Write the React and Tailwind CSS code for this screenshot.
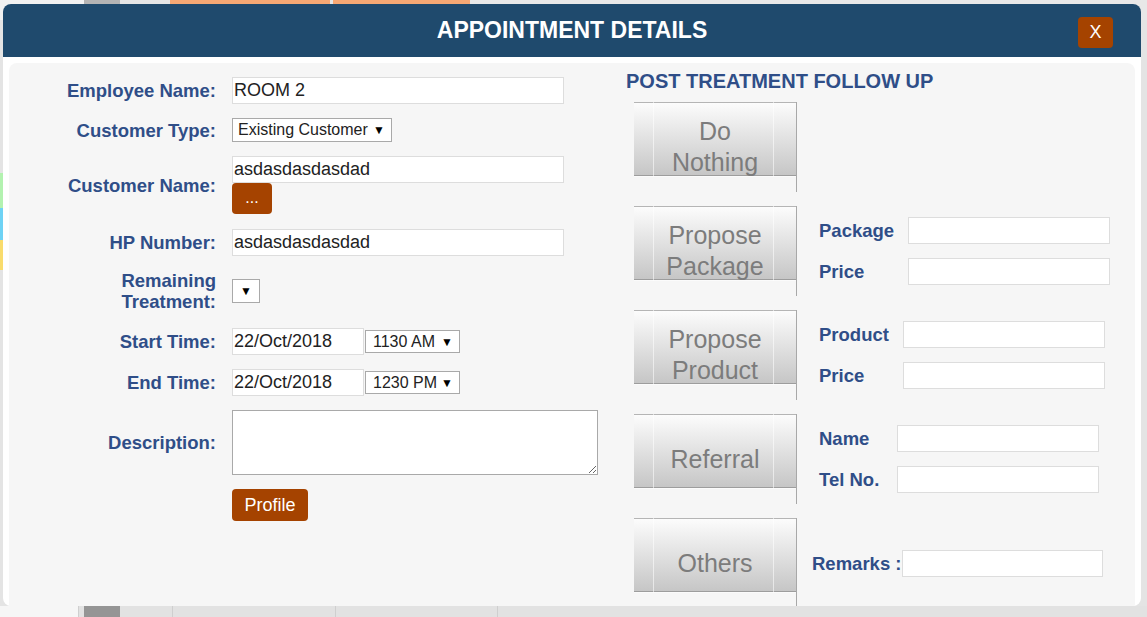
import React from "react";

// appointment popup over the schedule grid

const label = "text-[#2f4e88] font-bold text-[18.5px] leading-[21px]";
const brown = "bg-[#a54300] text-white rounded-[4px]";

function TextBox({ value, w = "w-[332px]" }) {
  return (
    <div className={`${w} h-[27px] bg-white border border-[#dddddd] flex items-center pl-px text-[18px] text-[#222] whitespace-nowrap overflow-hidden`}>
      {value}
    </div>
  );
}

function Picker({ value, w, h = "h-[24px]", pl = "pl-[5px]" }) {
  return (
    <div className={`${w} ${h} ${pl} bg-white border border-[#a9a9a9] flex items-center text-[16px] text-[#222] whitespace-nowrap`}>
      {value && <span className="flex-1">{value}</span>}
      <span className={`text-[12px] text-black ${value ? "pr-[6px]" : "mx-auto"}`}>▼</span>
    </div>
  );
}

function Row({ text, children, className = "" }) {
  return (
    <div className={`flex items-center ${className}`}>
      <div className={`w-[207px] text-right ${label}`}>{text}</div>
      <div className="ml-4 flex flex-col items-start">{children}</div>
    </div>
  );
}

function FollowButton({ lines }) {
  return (
    <div className="w-[163px] h-[90px] shrink-0 border-r border-[#a8a8a8] bg-no-repeat bg-[length:100%_75px] bg-[linear-gradient(to_right,transparent_19px,rgba(255,255,255,0.55)_19px,rgba(255,255,255,0.55)_20px,transparent_20px,transparent_139px,rgba(255,255,255,0.55)_139px,rgba(255,255,255,0.55)_140px,transparent_140px),linear-gradient(to_bottom,#b5b5b5_0px,#b5b5b5_1px,#fcfcfc_1px,#c6c6c6_73px,#9d9d9d_73px,#9d9d9d_74px,#fbfbfb_74px,#fbfbfb_75px)] flex flex-col items-center justify-center text-[25px] leading-[31px] text-[#7c7c7c]">
      {lines.map((l) => (
        <span key={l}>{l}</span>
      ))}
    </div>
  );
}

function SideField({ text, lw, iw = "w-[202px]" }) {
  return (
    <div className="flex items-center">
      <span className={`${lw} ${label} whitespace-nowrap`}>{text}</span>
      <div className={`${iw} h-[27px] bg-white border border-[#dddddd]`} />
    </div>
  );
}

function Block({ lines, children, gap = "ml-[22px]" }) {
  return (
    <div className="flex items-center">
      <FollowButton lines={lines} />
      <div className={`${gap} flex flex-col gap-[14px]`}>{children}</div>
    </div>
  );
}

export default function App() {
  return (
    <div className="relative w-[1147px] h-[617px] overflow-hidden bg-[#e4e4e4] font-['Liberation_Sans',Arial,sans-serif]">
      {/* schedule page behind the popup */}
      <div className="flex flex-col h-full">
        <div className="flex h-[20px]">
          <div className="w-[84px] bg-[#f2f2f2]" />
          <div className="w-[36px] bg-[#b4b4b4]" />
          <div className="w-[50px] bg-[#e6e6e6]" />
          <div className="w-[160px] bg-[#f6a874]" />
          <div className="w-[3px] bg-[#e6e6e6]" />
          <div className="w-[137px] bg-[#f6a874]" />
          <div className="flex-1 bg-[#e8e8e8]" />
        </div>
        <div className="flex-1 flex flex-col w-[3px] pt-[153px]">
          <div className="h-[35px] bg-[#b3f2b0]" />
          <div className="h-[32px] bg-[#6fd3f5]" />
          <div className="h-[30px] bg-[#f9dc6d]" />
        </div>
        <div className="flex h-[11px]">
          <div className="w-[78px] bg-[#f6f6f6]" />
          <div className="w-px bg-[#cfcfcf]" />
          <div className="w-[5px] bg-[#e2e2e2]" />
          <div className="w-[36px] bg-[#959595]" />
          <div className="w-[52px] bg-[#e2e2e2]" />
          <div className="w-px bg-[#cfcfcf]" />
          <div className="w-[162px] bg-[#e2e2e2]" />
          <div className="w-px bg-[#cfcfcf]" />
          <div className="w-[161px] bg-[#e2e2e2]" />
          <div className="w-px bg-[#cfcfcf]" />
          <div className="flex-1 bg-[#e2e2e2]" />
        </div>
      </div>

      {/* popup */}
      <div className="absolute left-[3px] top-[4px] w-[1138px] h-[602px] bg-white rounded-[8px] overflow-hidden flex flex-col">
        <div className="h-[53px] shrink-0 bg-[#1f4a6d] grid grid-cols-[1fr_auto_1fr] items-center">
          <div />
          <h1 className="text-white font-bold text-[23px] leading-none">APPOINTMENT DETAILS</h1>
          <div className="flex justify-end pr-[28px] pt-[3px]">
            <button className={`${brown} w-[35px] h-[31px] text-[18px] leading-none`}>X</button>
          </div>
        </div>

        <div className="flex-1 px-[6px] pt-[6px] overflow-hidden">
          <div className="h-full bg-[#f6f6f6] rounded-t-[8px] flex">
            {/* left form */}
            <div className="w-[617px] shrink-0 pt-[14px] flex flex-col gap-[14px]">
              <Row text="Employee Name:">
                <TextBox value="ROOM 2" />
              </Row>
              <Row text="Customer Type:">
                <Picker value="Existing Customer" w="w-[160px]" />
              </Row>
              <Row text="Customer Name:">
                <TextBox value="asdasdasdasdad" />
                <button className={`${brown} w-[40px] h-[31px] text-[16px] leading-none pb-[2px]`}>...</button>
              </Row>
              <Row text="HP Number:" className="mt-px">
                <TextBox value="asdasdasdasdad" />
              </Row>
              <Row text={<>Remaining<br />Treatment:</>}>
                <Picker w="w-[28px]" pl="pl-0" />
              </Row>
              <Row text="Start Time:" className="mt-[2px]">
                <div className="flex items-center">
                  <TextBox value="22/Oct/2018" w="w-[132px]" />
                  <Picker value="1130 AM" w="w-[95px] ml-px" h="h-[23px]" pl="pl-[7px]" />
                </div>
              </Row>
              <Row text="End Time:">
                <div className="flex items-center">
                  <TextBox value="22/Oct/2018" w="w-[132px]" />
                  <Picker value="1230 PM" w="w-[95px] ml-px" h="h-[23px]" pl="pl-[7px]" />
                </div>
              </Row>
              <Row text="Description:">
                <textarea className="w-[366px] h-[65px] bg-white border border-[#a9a9a9] block" />
              </Row>
              <div className="pl-[223px]">
                <button className={`${brown} w-[76px] h-[32px] text-[18px] leading-none`}>Profile</button>
              </div>
            </div>

            {/* right: follow up */}
            <div className="pt-[6px] flex flex-col">
              <h2 className="text-[#2f4e88] font-bold text-[20px] leading-[24px]">POST TREATMENT FOLLOW UP</h2>
              <div className="mt-[9px] ml-[8px] flex flex-col gap-[14px]">
                <Block lines={["Do", "Nothing"]} />
                <Block lines={["Propose", "Package"]}>
                  <SideField text="Package" lw="w-[89px]" />
                  <SideField text="Price" lw="w-[89px]" />
                </Block>
                <Block lines={["Propose", "Product"]}>
                  <SideField text="Product" lw="w-[84px]" />
                  <SideField text="Price" lw="w-[84px]" />
                </Block>
                <Block lines={["Referral"]}>
                  <SideField text="Name" lw="w-[78px]" />
                  <SideField text="Tel No." lw="w-[78px]" />
                </Block>
                <Block lines={["Others"]} gap="ml-[15px]">
                  <SideField text="Remarks :" lw="w-[90px]" iw="w-[201px]" />
                </Block>
              </div>
            </div>
          </div>
        </div>
      </div>
    </div>
  );
}
